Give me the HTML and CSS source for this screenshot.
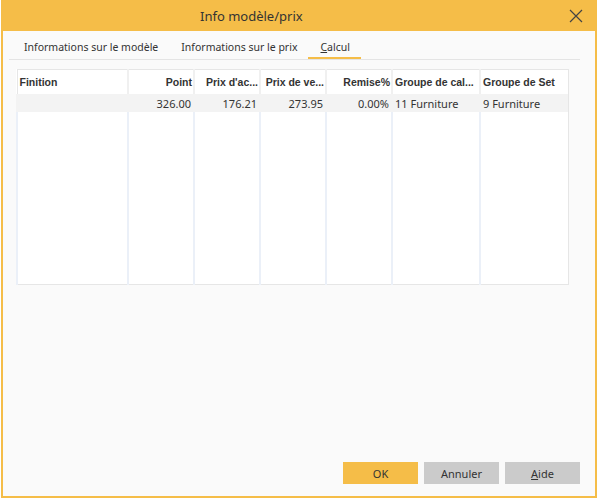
FILE: index.html
```html
<!DOCTYPE html>
<html lang="fr">
<head>
<meta charset="utf-8">
<title>Info modèle/prix</title>
<link rel="stylesheet" href="styles.css">
</head>
<body>
<div class="window">
  <div class="titlebar">
    <span class="title">Info modèle/prix</span>
    <span class="close">
      <svg width="14" height="14" viewBox="0 0 14 14"><path d="M1 1 L13 13 M13 1 L1 13" stroke="#444" stroke-width="1.2" fill="none"/></svg>
    </span>
  </div>
  <div class="content">
    <div class="tabs">
      <div class="tab">Informations sur le modèle</div>
      <div class="tab">Informations sur le prix</div>
      <div class="tab active"><u>C</u>alcul</div>
    </div>
    <table class="grid">
      <colgroup>
        <col class="c1"><col class="c2"><col class="c3"><col class="c4"><col class="c5"><col class="c6"><col class="c7">
      </colgroup>
      <thead>
        <tr>
          <th class="l">Finition</th>
          <th class="r">Point</th>
          <th class="r">Prix d'ac...</th>
          <th class="r">Prix de ve...</th>
          <th class="r">Remise%</th>
          <th class="l">Groupe de cal...</th>
          <th class="l">Groupe de Set</th>
        </tr>
      </thead>
      <tbody>
        <tr class="data">
          <td class="l"></td>
          <td class="r">326.00</td>
          <td class="r">176.21</td>
          <td class="r">273.95</td>
          <td class="r">0.00%</td>
          <td class="l">11 Furniture</td>
          <td class="l">9 Furniture</td>
        </tr>
        <tr class="filler">
          <td></td><td></td><td></td><td></td><td></td><td></td><td></td>
        </tr>
      </tbody>
    </table>
    <div class="spacer"></div>
    <div class="buttons">
      <button class="btn primary">OK</button>
      <button class="btn">Annuler</button>
      <button class="btn"><u>A</u>ide</button>
    </div>
  </div>
</div>
</body>
</html>
```
FILE: styles.css
```css
html, body {
  margin: 0;
  padding: 0;
  background: #ffffff;
}
body {
  font-family: "Noto Sans", "DejaVu Sans", sans-serif;
  font-size: 11px;
  color: #333;
}
.window {
  margin-left: 1px;
  width: 592px;
  height: 496px;
  border: 2px solid #f5bd48;
  border-top-width: 0;
  display: flex;
  flex-direction: column;
  background: #fafafa;
}
.titlebar {
  height: 31px;
  background: #f5bd48;
  display: flex;
  align-items: center;
  flex: none;
}
.title {
  margin-left: 197px;
  font-size: 13px;
  color: #333;
  flex: 1;
}
.close {
  width: 14px;
  height: 14px;
  margin-right: 12px;
  display: flex;
}
.content {
  flex: 1;
  display: flex;
  flex-direction: column;
}
.tabs {
  display: flex;
  margin: 7px 15px 0 6px;
  padding-left: 3px;
  border-bottom: 1px solid #e4e4e4;
  height: 21px;
  font-size: 10.5px;
}
.tab {
  padding: 0 11px 0 12px;
  line-height: 19px;
  color: #333;
  border-bottom: 2px solid transparent;
}
.tab.active {
  border-bottom-color: #f5bd48;
}
.grid {
  margin: 9px 0 0 13px;
  width: 551px;
  height: 216px;
  border-collapse: collapse;
  table-layout: fixed;
  background: #ffffff;
  border: 1px solid #e6e6e6;
}
.c1 { width: 111px; }
.c2, .c3, .c4, .c5 { width: 66px; }
.c6, .c7 { width: 88px; }
th, td {
  padding: 0 2px;
  white-space: nowrap;
  overflow: hidden;
}
th {
  height: 24px;
  padding: 0 1px 0 2px;
  font-family: "Liberation Sans", Arial, sans-serif;
  font-weight: bold;
  font-size: 10.5px;
  color: #333;
  border-left: 2px solid #f0f0f0;
}
th:first-child, td:first-child { border-left: none; }
.l { text-align: left; }
.r { text-align: right; }
.data td {
  height: 18px;
  background: #f3f3f3;
  border-left: 2px solid #f3f3f3;
  color: #333;
}
.filler td {
  border-left: 2px solid #ebf0f8;
}
.spacer { flex: 1; }
.buttons {
  display: flex;
  justify-content: flex-end;
  gap: 6px;
  margin: 0 15px 12px 0;
}
.btn {
  width: 75px;
  height: 22px;
  border: none;
  background: #cbcbcb;
  font-family: "Noto Sans", "DejaVu Sans", sans-serif;
  font-size: 11px;
  color: #333;
  padding: 0;
}
.btn.primary {
  background: #f5bd48;
}
```
